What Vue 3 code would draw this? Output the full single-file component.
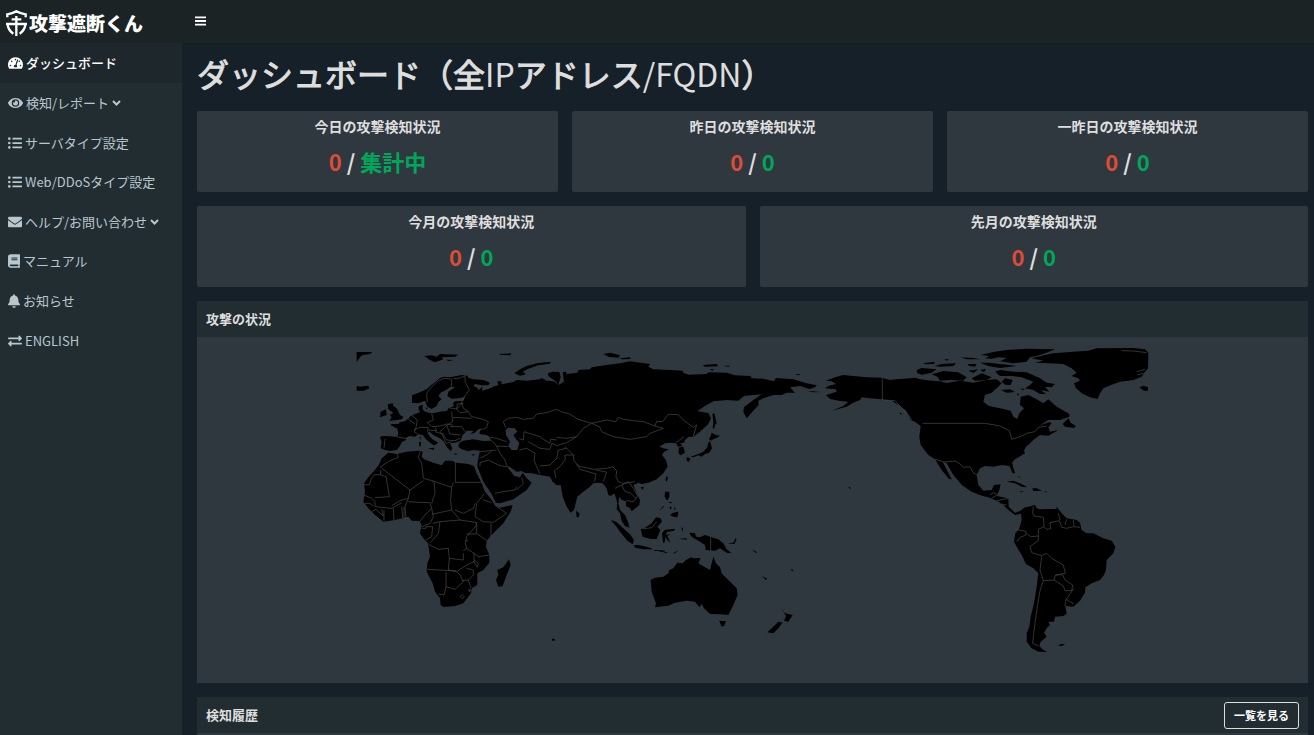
<script setup>
const icons = {
  gauge: { w: 576, d: 'M288 32C128.94 32 0 160.94 0 320c0 52.8 14.25 102.26 39.06 144.8 5.61 9.62 16.3 15.2 27.44 15.2h443c11.14 0 21.83-5.58 27.44-15.2C561.75 422.26 576 372.8 576 320c0-159.06-128.94-288-288-288zm0 64c14.71 0 26.58 10.13 30.32 23.65-1.11 2.26-2.64 4.23-3.45 6.67l-9.22 27.67c-5.13 3.49-10.97 6.01-17.64 6.01-17.67 0-32-14.33-32-32S270.33 96 288 96zM96 384c-17.67 0-32-14.33-32-32s14.33-32 32-32 32 14.33 32 32-14.33 32-32 32zm48-160c-17.67 0-32-14.33-32-32s14.33-32 32-32 32 14.33 32 32-14.33 32-32 32zm246.77-72.41l-61.33 184C343.13 347.33 352 364.54 352 384c0 11.72-3.38 22.55-8.88 32H232.88c-5.5-9.45-8.88-20.28-8.88-32 0-33.94 26.5-61.43 59.9-63.59l61.34-184.01c4.17-12.56 17.73-19.45 30.36-15.17 12.57 4.19 19.35 17.79 15.17 30.36zm14.66 57.2l15.52-46.55c3.47-1.29 7.13-2.23 11.05-2.23 17.67 0 32 14.33 32 32s-14.33 32-32 32c-11.38-.01-20.89-6.28-26.57-15.22zM480 384c-17.67 0-32-14.33-32-32s14.33-32 32-32 32 14.33 32 32-14.33 32-32 32z' },
  eye: { w: 576, d: 'M572.52 241.4C518.29 135.59 410.93 64 288 64S57.68 135.64 3.48 241.41a32.35 32.35 0 0 0 0 29.19C57.71 376.41 165.07 448 288 448s230.32-71.64 284.52-177.41a32.35 32.35 0 0 0 0-29.19zM288 400a144 144 0 1 1 144-144 143.93 143.93 0 0 1-144 144zm0-240a95.31 95.31 0 0 0-25.31 3.79 47.85 47.85 0 0 1-66.9 66.9A95.78 95.78 0 1 0 288 160z' },
  list: { w: 512, d: 'M48 48a48 48 0 1 0 48 48 48 48 0 0 0-48-48zm0 160a48 48 0 1 0 48 48 48 48 0 0 0-48-48zm0 160a48 48 0 1 0 48 48 48 48 0 0 0-48-48zm448 16H176a16 16 0 0 0-16 16v32a16 16 0 0 0 16 16h320a16 16 0 0 0 16-16v-32a16 16 0 0 0-16-16zm0-320H176a16 16 0 0 0-16 16v32a16 16 0 0 0 16 16h320a16 16 0 0 0 16-16V80a16 16 0 0 0-16-16zm0 160H176a16 16 0 0 0-16 16v32a16 16 0 0 0 16 16h320a16 16 0 0 0 16-16v-32a16 16 0 0 0-16-16z' },
  mail: { w: 512, d: 'M502.3 190.8c3.9-3.1 9.7-.2 9.7 4.7V400c0 26.5-21.5 48-48 48H48c-26.5 0-48-21.5-48-48V195.6c0-5 5.7-7.8 9.7-4.7 22.4 17.4 52.1 39.5 154.1 113.6 21.1 15.4 56.7 47.8 92.2 47.6 35.7.3 72-32.8 92.3-47.6 102-74.1 131.6-96.3 154-113.7zM256 320c23.2.4 56.6-29.2 73.4-41.4 132.7-96.3 142.8-104.7 173.4-128.7 5.8-4.5 9.2-11.5 9.2-18.9v-19c0-26.5-21.5-48-48-48H48c-26.5 0-48 21.5-48 48v19c0 7.4 3.4 14.3 9.2 18.9 30.6 23.9 40.7 32.4 173.4 128.7 16.8 12.2 50.2 41.8 73.4 41.4z' },
  book: { w: 448, d: 'M448 360V24c0-13.3-10.7-24-24-24H96C43 0 0 43 0 96v320c0 53 43 96 96 96h328c13.3 0 24-10.7 24-24v-16c0-7.5-3.5-14.3-8.9-18.7-4.2-15.4-4.2-59.3 0-74.7 5.4-4.3 8.9-11.1 8.9-18.6zM128 134c0-3.3 2.7-6 6-6h212c3.3 0 6 2.7 6 6v20c0 3.3-2.7 6-6 6H134c-3.3 0-6-2.7-6-6v-20zm0 64c0-3.3 2.7-6 6-6h212c3.3 0 6 2.7 6 6v20c0 3.3-2.7 6-6 6H134c-3.3 0-6-2.7-6-6v-20zm253.4 250H96c-17.7 0-32-14.3-32-32 0-17.6 14.4-32 32-32h285.4c-1.9 17.1-1.9 46.9 0 64z' },
  bell: { w: 448, d: 'M224 512c35.32 0 63.97-28.65 63.97-64H160.03c0 35.35 28.65 64 63.97 64zm215.39-149.71c-19.32-20.76-55.47-51.99-55.47-154.29 0-77.7-54.48-139.9-127.94-155.16V32c0-17.67-14.32-32-31.98-32s-31.98 14.33-31.98 32v20.84C118.56 68.1 64.08 130.3 64.08 208c0 102.3-36.15 133.53-55.47 154.29-6 6.45-8.66 14.16-8.61 21.71.11 16.4 12.98 32 32.1 32h383.8c19.12 0 32-15.6 32.1-32 .05-7.55-2.61-15.27-8.61-21.71z' },
  swap: { w: 512, d: 'M0 168v-16c0-13.255 10.745-24 24-24h360V80c0-21.367 25.899-32.042 40.971-16.971l80 80c9.372 9.373 9.372 24.569 0 33.941l-80 80C409.956 271.982 384 261.456 384 240v-48H24c-13.255 0-24-10.745-24-24zm488 152H128v-48c0-21.314-25.862-32.08-40.971-16.971l-80 80c-9.372 9.373-9.372 24.569 0 33.941l80 80C102.057 463.997 128 453.437 128 432v-48h360c13.255 0 24-10.745 24-24v-16c0-13.255-10.745-24-24-24z' },
}

const menu = [
  { label: 'ダッシュボード', icon: 'gauge', active: true },
  { label: '検知/レポート', icon: 'eye', expandable: true },
  { label: 'サーバタイプ設定', icon: 'list' },
  { label: 'Web/DDoSタイプ設定', icon: 'list' },
  { label: 'ヘルプ/お問い合わせ', icon: 'mail', expandable: true },
  { label: 'マニュアル', icon: 'book' },
  { label: 'お知らせ', icon: 'bell' },
  { label: 'ENGLISH', icon: 'swap' },
]

const rows = [
  [
    { title: '今日の攻撃検知状況', high: '0', low: '集計中' },
    { title: '昨日の攻撃検知状況', high: '0', low: '0' },
    { title: '一昨日の攻撃検知状況', high: '0', low: '0' },
  ],
  [
    { title: '今月の攻撃検知状況', high: '0', low: '0' },
    { title: '先月の攻撃検知状況', high: '0', low: '0' },
  ],
]

// Each map region: x/y offset, land outlines and country borders.
const regions = [
  {
    name: 'eurasia-africa', x: 0, y: 0,
    land: [
      'M216 188V166L232 160 250 152 262 146 270 138 290 122 300 114 315 110 328 112 350 108 365 105 382 107 385 113 400 118 430 120 450 128 445 136 425 136 405 132 400 138 412 143 415 150 428 140 425 152 445 147 460 140 475 135 472 124 484 124 485 133 500 130 520 126 530 120 560 122 600 118 605 114 620 122 640 124 655 134 645 122 625 108 624 100 638 95 658 96 662 112 655 135 672 125 668 97 678 95 680 102 712 98 715 90 750 88 755 82 800 75 840 70 870 64 930 72 925 80 940 88 990 90 1028 92 1030 98 1045 104 1100 102 1105 97 1160 98 1185 106 1232 108 1234 115 1270 116 1302 124 1308 114 1360 118 1400 130 1430 136 1425 142 1408 147 1380 138 1350 142 1365 158 1340 158 1325 165 1300 165 1270 175 1255 182 1256 195 1240 212 1220 235 1210 215 1212 202 1240 180 1265 163 1240 165 1212 168 1195 182 1160 180 1120 184 1095 198 1072 213 1090 217 1105 219 1113 235 1105 252 1080 275 1060 290 1046 290 1035 300 1032 308 1020 310 1030 320 1035 338 1022 346 1015 340 1017 325 1008 310 990 308 975 310 958 320 970 325 986 328 972 336 966 345 978 360 983 380 970 400 950 418 925 428 905 432 895 428 880 435 890 460 900 480 898 495 875 514 870 505 858 498 858 484 845 480 838 470 835 490 840 510 855 525 865 548 868 563 855 558 845 542 840 520 830 508 832 490 828 475 823 460 812 468 805 465 800 445 788 430 775 428 760 430 750 440 730 455 712 470 708 485 702 510 692 518 680 500 668 470 662 435 650 436 638 425 630 410 600 405 575 400 555 399 545 393 530 395 515 385 498 374 505 385 523 408 540 412 548 398 560 415 575 428 560 450 520 478 480 490 467 488 455 462 430 425 412 380 412 372 415 355 420 332 400 330 385 334 365 328 355 320 358 308 370 302 400 298 430 303 455 302 450 295 440 285 418 282 420 272 432 265 415 268 405 278 392 282 400 272 380 272 375 278 368 285 362 302 345 308 330 310 337 325 332 334 320 320 312 305 300 295 280 285 268 275 262 278 270 290 280 300 294 307 290 312 282 316 270 308 258 298 248 285 235 283 225 290 210 288 200 292 198 300 185 307 180 318 170 330 150 333 135 330 122 325 125 305 120 293 125 288 150 289 172 291 175 280 172 266 152 256 154 252 175 252 180 247 195 244 205 236 212 228 225 222 240 217 235 205 237 198 249 194 247 205 252 214 265 218 278 220 300 215 322 212 325 203 342 199 339 190 345 184 370 182 375 171 360 174 335 176 322 168 325 155 345 142 332 140 318 150 302 158 295 168 305 178 295 186 290 198 275 207 262 200 255 182 235 190ZM497 270L505 263 525 265 532 275 520 285 530 300 538 308 532 330 515 330 505 318 510 305 498 285Z',
      'M145 338L170 342 200 335 235 332 248 335 245 350 252 358 280 368 305 376 315 362 335 362 350 368 385 372 402 378 408 395 425 430 435 455 455 480 466 498 480 503 518 495 512 515 490 550 460 580 440 602 438 620 448 645 448 668 430 690 412 700 412 735 395 745 393 760 370 790 345 798 310 801 302 795 300 775 285 755 278 730 260 695 262 670 270 650 264 610 250 595 240 580 245 555 238 543 215 542 205 530 165 540 130 545 105 525 85 505 70 485 75 455 72 430 85 412 105 390 118 372 125 355Z',
      'M143 193L158 190 160 198 170 205 180 225 190 230 185 238 165 241 148 242 155 232 150 225 160 218 145 208ZM122 215L138 208 140 225 120 232ZM50 138L60 140 85 137 88 145 70 152 50 152ZM50 36H97L90 42 65 46 56 58 50 66ZM253 48L275 46 290 50 300 42 355 44 345 50 305 52 310 58 285 67 270 60ZM318 59L340 60 325 63ZM478 42L515 40 510 46 480 44ZM523 100L540 88 560 78 590 70 632 66V70L595 76 565 86 548 95 558 103 540 107ZM264 325L282 323V330ZM237 305L243 307 242 320 238 318ZM238 292L242 290 242 300ZM342 340L355 342 345 344ZM394 344L405 341 400 347ZM256 202L262 204 260 210ZM507 658L512 675 498 710 488 738 475 740 468 720 475 705 472 690 490 682ZM635 896H644V902H637Z',
    ],
    border: 'M262 187L260 160 275 140 295 122 315 115 335 118 335 140M340 116L360 114 375 107 375 125 388 150 372 172 365 187 370 205 385 215 395 230 430 238 445 245 440 262 430 268M497 262L490 245 505 235 530 232 550 238 580 235 590 222 620 218 650 208 665 216 685 220 715 238 755 250 800 240 828 245 835 232 850 238 880 242 910 245 945 258 950 244 968 245 985 223 1015 224 1030 240 1060 262 1070 255 1060 288M755 250L780 262 785 275 820 290 870 298 920 290 930 280 970 265 945 258M755 250L730 265 710 290 680 295 650 292M710 290L680 308 655 315M675 320L700 345 702 362 715 378 760 388 800 385 818 380 830 392 828 410 835 425 850 430 885 425M710 372L720 388 768 402 764 425M768 390L800 396 790 425M700 345L675 345 675 360 660 380 643 392 648 414M600 378L630 375 650 355 655 330 680 325M538 296L550 300 552 275 600 290 610 298 630 310 632 298 650 300M565 305L600 325 630 328 635 310 655 318M538 330L560 325 585 340 582 360 590 380 600 402M470 318L480 340 495 360 500 375M440 290L470 295 500 305M455 302L470 318 505 320M420 335L470 330M418 355L440 345 455 333M420 378L420 368 445 360 480 377 500 380M346 365V427H425M240 335L235 352 245 370 248 395 250 415 275 422 335 442 340 428M335 442L332 480 335 510 275 523M275 420L283 428 285 460 275 490M120 380L145 400 210 450 250 422M122 380L150 362 175 352 172 340M70 434H88L95 414 103 404 122 404V390M122 404L138 410 148 470 105 473M210 450L205 475 180 482 155 497M205 485L235 487 270 488 275 505 255 525 240 543M205 475L195 500 198 535M72 465L95 475 105 485 105 500 155 505 185 488M75 490H90L100 498M95 515L108 508 130 528 125 508M132 510V542M160 505L162 540M185 500L188 535M192 500V535M432 462L410 490 405 530 430 545 460 547 500 520 470 500M430 480L455 488M345 510L370 520 400 505 405 490M335 510L360 540 300 545 278 550M360 540L410 548M300 545L295 580 272 607M266 613L295 628 325 625 328 655 370 660V640M410 548L408 558 380 590 376 610 380 625 370 632M410 548L410 580 440 602M380 582H410M376 602H385M380 625L402 640 415 650 448 645M402 640V665L412 682 415 670 402 660M328 655L325 690 350 695 380 675 402 665M262 688L350 693M318 695V740L312 765 295 762M318 740L345 748 370 725 360 705 350 695M380 685L400 690 400 705 385 720 365 722M385 720L393 745M360 770L367 764 373 770 366 776ZM386 748L392 750 388 756ZM453 550V590M275 505L280 530 270 550 245 560M245 565H258V560H278L275 590 258 600M465 460L490 455 525 450 530 440M530 450L550 430 545 412M215 225L232 240 228 262 222 275 235 283M205 238L225 252M275 220L280 240 262 248 275 260 300 258 320 252 340 256M335 215L338 245 320 256 300 275M338 232L395 235M300 275L310 285 320 300 345 302 360 295M330 260L365 260 375 275M320 256L330 282 362 285M265 262L262 275M285 262L290 272 265 270M285 275L310 282M305 280L318 310 335 305M222 270L240 262 265 262M135 297L132 325M325 203L350 207 368 188M350 207L360 218 385 215M350 207L352 192 370 190M172 291L202 296M1008 308L1032 290M1015 322L1030 318M825 445L845 435 855 455 870 458 888 475M845 435L865 425 880 445 893 468 880 485 858 482',
  },
  {
    name: 'east-asia', x: 600, y: 0,
    land: [
      'M190 42L210 38 240 46 235 53 205 50ZM240 55L270 52 272 57 245 58ZM0 69L30 67 28 71 0 74ZM488 75L530 72 535 79 495 80ZM550 77L572 77 565 80ZM508 88L522 88 518 92ZM765 103L782 102 775 106ZM517 222L523 220 530 250 525 255 522 268 518 262 520 245ZM515 278L528 285 540 287 530 294 520 297 515 302 507 298 512 288ZM510 303L516 325 508 338 495 342 485 350 475 346 460 352 452 350 475 342 490 335 502 322 505 308ZM440 352L452 355 446 366 440 362ZM380 408L384 412 380 426 376 420ZM302 442L312 440 308 450ZM108 512L118 520 117 530 110 532Z',
      'M375 455L388 455 388 470 382 482 374 470ZM384 486L398 486 392 490ZM388 500L395 500 392 510ZM400 518L415 515 412 532 400 530 390 525ZM402 500L408 508 404 510ZM357 513L370 498 372 500ZM212 540L228 545 250 565 272 585 282 600 278 613 262 602 240 575 228 558ZM282 615L300 616 325 622 340 628 310 628 285 623ZM343 630H356V633H343ZM358 630L375 632V635H358ZM368 638L382 636 380 640ZM398 640L418 630 405 640ZM302 568L315 563 335 550 348 532 362 535 366 545 352 560 361 570 350 598 330 596 308 590ZM366 580L374 570 405 566 402 572 380 576 378 585 392 582 382 588 391 608 382 600 377 590 373 610 369 608ZM424 563H429V576ZM415 596L440 595 440 599ZM447 578L465 580 468 590 480 592 495 585 515 592 535 598 550 610 560 628 575 640 560 638 540 625 525 632 497 630 495 615 475 602 455 590ZM562 610L580 608 587 595 590 598 583 612ZM605 614L618 622ZM635 628L650 636 648 640ZM665 708L682 716 678 720ZM752 688L762 690 756 694Z',
      'M332 720L345 713 370 710 385 700 388 690 400 685 412 668 428 670 438 660 448 655 455 652 460 655 482 654 475 670 495 682 510 690 515 670 520 650 528 670 540 682 545 700 565 720 590 745 593 765 580 795 565 825 540 823 510 822 492 805 485 792 478 802 465 785 440 782 405 788 385 797 345 802 348 790 335 755ZM538 842L558 844 552 858 545 860ZM722 802L735 820 758 825 745 845 732 842 738 828ZM715 845L728 848 715 865 700 880 682 877 700 860Z',
    ],
    border: 'M512 592V632M308 567L335 563 350 545',
  },
  {
    name: 'north-america', x: 1380, y: 0,
    land: [
      'M78 122L105 112 130 105 160 108 200 112 245 113 270 120 290 118 330 115 345 113 360 118 395 122 420 124 440 129 480 122 520 128 560 120 590 118 605 130 595 140 575 158 555 165 550 185 565 197 600 205 632 212 640 230 652 237 658 220 672 205 660 195 662 170 685 165 710 178 730 190 745 178 770 200 808 222 808 230 780 240 745 240 718 257 748 246 755 250 745 262 750 275 775 270 745 287 720 285 700 300 690 310 678 320 672 332 675 340 645 358 636 368 645 400 638 400 628 378 605 375 580 380 555 378 540 385 530 405 535 435 550 452 575 450 582 435 602 433 598 450 590 468 625 475 626 500 645 518 662 512 672 520 645 525 625 510 610 495 590 482 565 472 545 467 515 455 485 435 480 428 460 405 440 370 428 365 455 418 447 417 425 390 405 358 385 345 362 315 358 290 362 258 345 245 332 240 318 212 300 198 275 182 245 178 210 175 185 172 180 180 160 188 140 200 95 212 130 198 145 185 120 183 90 177 78 165 110 155 108 148 75 145 85 138 108 132 95 124Z',
      'M788 252L805 235 812 248 828 258 822 264 795 260ZM585 95L600 90 640 95 680 97 720 115 740 128 765 132 755 142 735 140 748 155 722 150 738 162 720 162 700 150 675 145 690 135 700 125 665 112 635 108 600 108ZM603 150L630 148 645 156 620 158ZM650 162L656 160V168ZM395 103L430 93 475 97 500 112 490 122 450 120 420 122 412 110ZM350 90L365 84 410 88 395 98 365 104 352 100ZM515 115L545 100 575 112 560 120 525 122ZM370 70L405 65 402 72 375 73ZM405 78L425 72 468 70 460 78 420 80ZM433 58L447 58 440 62ZM482 52L520 54 540 58 500 58ZM502 72L530 72 525 80 508 78ZM540 68L565 68 620 74 650 78 600 84 565 78ZM505 92L535 88 520 99ZM540 90L558 86 552 97ZM605 125L615 115 638 120 632 135 615 134ZM662 145L675 148 668 151Z',
      'M542 45L580 36 620 30 680 26 765 28 735 40 710 48 690 52 680 65 640 70 600 64 620 54 595 52 575 56 555 55 568 48ZM695 55L735 45 760 40 820 35 865 32 890 25 1000 24 1035 28 1045 38 1044 85 1035 95 1025 110 1000 120 960 125 935 134 910 145 900 160 893 177 870 172 845 160 828 145 822 130 840 122 835 115 815 108 830 98 815 85 790 72 750 70 705 68 730 62ZM1018 142L1030 137 1044 142V152H1032ZM620 425L640 422 665 432 682 442 665 440 645 430ZM697 445L710 445 725 452 700 453ZM660 453L672 455 662 457ZM735 453L742 455 736 457ZM652 408L664 412 656 412ZM145 440L153 443 150 447ZM298 218L306 220 303 224ZM332 240L350 242 368 258 360 256 348 246ZM20 152L62 156 40 157Z',
    ],
    border: 'M247 113V180L285 182 325 225 335 240M368 250H555L600 258 628 272 635 298 660 290 680 280 705 275 715 262 740 258M405 358L432 366 465 363 480 372 490 382 510 380 520 398 532 405M570 465L580 458 590 462M575 475L590 465M590 482L625 475M605 492L620 495M1010 95L1035 88M1012 105L1030 100M965 32L1000 33 1040 38',
  },
  {
    name: 'south-america', x: 1680, y: 390,
    land: [
      'M362 122L375 112 385 110 405 105 410 115 420 118 440 117 475 117 485 130 500 145 530 150 540 158 545 180 560 190 580 190 610 205 635 212 646 230 640 250 620 270 618 300 612 315 600 330 575 340 556 352 555 368 540 392 520 410 496 408 500 432 490 438 465 440 462 455 445 455 450 465 440 475 432 488 440 500 422 515 418 528 430 540 442 546 415 545 395 535 380 515 380 490 388 470 392 440 402 400 410 350 415 310 400 295 378 282 365 255 350 230 342 215 346 190 358 175 365 150Z',
      'M473 526L484 522 495 522 486 528ZM467 112L475 113 472 118Z',
    ],
    border: 'M400 110L398 130 402 138 430 142 432 170 415 178 415 212 390 230 395 248 425 257 440 250 455 265 490 285 496 310 467 315 462 330 430 332 420 300 425 257M346 178L378 184 378 195 360 202 350 216M380 190L392 200 415 198M467 315L488 314 495 330 518 345 515 362 495 362 490 348 462 330M522 355L498 388 522 402M498 388L495 408M430 332L420 362 412 410 405 460 400 500 398 520 415 528M432 170L440 178 452 176 450 158 478 152 485 172 500 175 520 170 540 172M475 130L480 150M500 148L495 165M520 150L522 168',
  },
]
</script>

<template>
  <div class="app">
    <header class="topbar">
      <a class="brand" href="#">
        <svg class="brand-mark" viewBox="0 0 63 78" aria-hidden="true">
          <path d="M4 22V13Q20 11 31 4 43 11 59 13V22M5 46Q8 62 22 71M58 46Q55 62 41 71M0 42H63M17 28H46M31 18V78" />
        </svg>
        <span>攻撃遮断くん</span>
      </a>
      <button class="menu-toggle" type="button" aria-label="メニュー">
        <svg viewBox="0 0 12 10" aria-hidden="true"><path d="M0 0h12v2H0zM0 4h12v2H0zM0 8h12v2H0z" /></svg>
      </button>
    </header>

    <div class="body">
      <aside class="sidebar">
        <nav class="nav">
          <a v-for="item in menu" :key="item.label" href="#" class="nav-item" :class="{ active: item.active }">
            <svg class="nav-icon" :class="'icon-' + icons[item.icon].w" :viewBox="`0 0 ${icons[item.icon].w} 512`" aria-hidden="true">
              <path :d="icons[item.icon].d" />
            </svg>
            <span>{{ item.label }}</span>
            <svg v-if="item.expandable" class="caret" viewBox="0 0 9 6" aria-hidden="true"><path d="M1 1l3.500 3.500L8 1" /></svg>
          </a>
        </nav>
      </aside>

      <main class="content">
        <h1>ダッシュボード（全<span class="latin">IP</span>アドレス<span class="latin">/FQDN</span>）</h1>

        <div v-for="(row, i) in rows" :key="i" class="stat-row">
          <section v-for="card in row" :key="card.title" class="stat">
            <h2>{{ card.title }}</h2>
            <p><span class="high">{{ card.high }}</span> / <span class="low">{{ card.low }}</span></p>
          </section>
        </div>

        <section class="panel">
          <div class="panel-head"><h3>攻撃の状況</h3></div>
          <svg class="map" viewBox="-429 -9 3333 1038" role="img" aria-label="世界地図">
            <g v-for="r in regions" :key="r.name" :transform="`translate(${r.x} ${r.y})`">
              <path v-for="(d, n) in r.land" :key="n" class="land" :d="d" />
              <path class="border" :d="r.border" />
            </g>
          </svg>
        </section>

        <section class="panel history">
          <div class="panel-head">
            <h3>検知履歴</h3>
            <button class="outline" type="button">一覧を見る</button>
          </div>
        </section>
      </main>
    </div>
  </div>
</template>

<style>
body { background: #162028; }
</style>

<style scoped>
.app {
  display: flex;
  flex-direction: column;
  height: 100vh;
  overflow: hidden;
  background: #162028;
  color: #dedede;
  font-family: "Noto Sans CJK JP", sans-serif;
  font-size: 13px;
}
.topbar {
  display: flex;
  align-items: center;
  flex: none;
  height: 43px;
  background: #1c2325;
}
.brand {
  display: flex;
  align-items: center;
  gap: 2px;
  width: 188px;
  box-sizing: border-box;
  padding: 3px 0 0 6px;
  color: #fff;
  font-size: 19px;
  line-height: 28px;
  font-weight: 900;
  text-decoration: none;
  white-space: nowrap;
}
.brand-mark { width: 21px; height: 26px; flex: none; }
.brand-mark path { fill: none; stroke: #fff; stroke-width: 7; }
.menu-toggle {
  display: flex;
  padding: 6px 7px 8px;
  border: 0;
  background: none;
}
.menu-toggle svg { width: 11px; height: 10px; fill: #fff; }
.body { display: flex; flex: 1; min-height: 0; }
.sidebar {
  flex: none;
  width: 182px;
  background: #222d32;
}
.nav {
  display: grid;
  grid-template-rows: repeat(8, 1fr);
  height: 317px;
}
.nav-item {
  display: flex;
  align-items: center;
  gap: 3px;
  padding: 1px 8px 0;
  color: #b8c7ce;
  text-decoration: none;
  white-space: nowrap;
}
.nav-item.active { background: #1e282c; color: #fff; font-weight: 500; }
.nav-icon { height: 14px; fill: currentColor; flex: none; }
.icon-576 { width: 15px; }
.icon-512 { width: 14px; }
.icon-448 { width: 12px; }
.nav-item span { line-height: 20px; }
.caret { width: 9px; height: 6px; flex: none; }
.caret path { fill: none; stroke: currentColor; stroke-width: 2; }
.content {
  display: flex;
  flex-direction: column;
  gap: 14px;
  flex: 1;
  min-width: 0;
  padding: 8px 6px 0 15px;
}
h1, h2, h3, p { margin: 0; }
h1 {
  margin-bottom: 2px;
  font-size: 32px;
  line-height: 44px;
  font-weight: 400;
  white-space: nowrap;
  -webkit-text-stroke: 1px currentColor;
}
.latin { -webkit-text-stroke: 0; }
.stat-row { display: flex; gap: 14px; }
.stat {
  flex: 1;
  box-sizing: border-box;
  height: 81px;
  padding-top: 5px;
  border-radius: 2px;
  background: #2f383e;
  text-align: center;
}
.stat h2 { font-size: 14px; line-height: 20px; font-weight: 700; }
.stat p { margin-top: 9px; font-size: 22px; line-height: 32px; font-weight: 700; }
.high { color: #dd4b39; }
.low { color: #00a65a; }
.panel { flex: none; background: #2f383e; }
.panel-head {
  display: flex;
  align-items: center;
  justify-content: space-between;
  height: 36px;
  padding: 0 9px;
  background: #222d32;
}
.panel-head h3 { font-size: 13px; line-height: 20px; font-weight: 700; }
.map { display: block; width: 100%; height: auto; }
.land { fill: #000; fill-rule: evenodd; }
.border { fill: none; stroke: #4c4c4c; stroke-width: 2; }
.history { flex: 1; min-height: 0; }
.outline {
  height: 27px;
  padding: 0 9px;
  border: 1px solid #dedede;
  border-radius: 3px;
  background: transparent;
  color: #fff;
  font-family: inherit;
  font-size: 11px;
  font-weight: 700;
}
</style>
